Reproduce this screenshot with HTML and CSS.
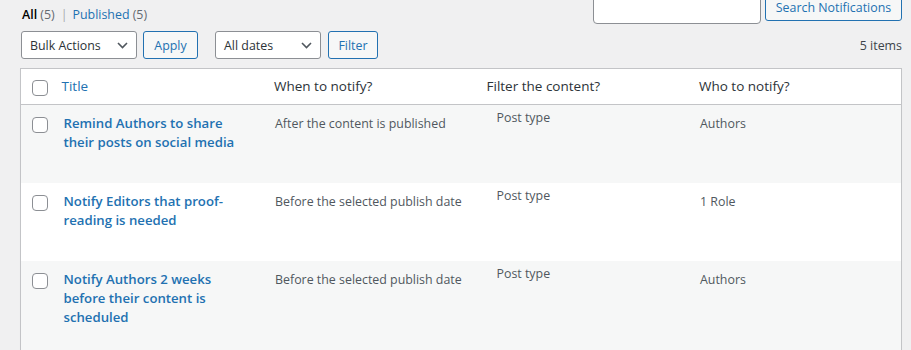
FILE: index.html
```html
<!DOCTYPE html>
<html>
<head>
<meta charset="utf-8">
<link rel="stylesheet" href="styles.css">
</head>
<body>
<div class="wrap">
  <div class="top">
    <ul class="subsubsub">
      <li><a class="current">All</a> <span class="count">(5)</span></li>
      <li class="sep">|</li>
      <li><a class="link">Published</a> <span class="count">(5)</span></li>
    </ul>
    <div class="search-box">
      <div class="search-input"></div>
      <div class="btn btn-search">Search Notifications</div>
    </div>
  </div>
  <div class="tablenav">
    <div class="actions">
      <div class="select select-bulk"><span>Bulk Actions</span><svg class="chev" width="11" height="7" viewBox="0 0 11 7"><path d="M1 1 L5.5 5.5 L10 1" fill="none" stroke="#50575e" stroke-width="1.6"/></svg></div>
      <div class="btn btn-apply">Apply</div>
    </div>
    <div class="actions">
      <div class="select select-dates"><span>All dates</span><svg class="chev" width="11" height="7" viewBox="0 0 11 7"><path d="M1 1 L5.5 5.5 L10 1" fill="none" stroke="#50575e" stroke-width="1.6"/></svg></div>
      <div class="btn btn-filter">Filter</div>
    </div>
    <div class="items">5 items</div>
  </div>
  <table class="list">
    <colgroup>
      <col class="c-check"><col><col><col><col>
    </colgroup>
    <thead>
      <tr>
        <th class="check"><span class="cb"></span></th>
        <th><a class="sort">Title</a></th>
        <th>When to notify?</th>
        <th>Filter the content?</th>
        <th>Who to notify?</th>
      </tr>
    </thead>
    <tbody>
      <tr class="alt">
        <td class="check"><span class="cb"></span></td>
        <td class="title"><a class="row-title">Remind Authors to share their posts on social media</a><div class="row-actions"></div></td>
        <td>After the content is published</td>
        <td><div class="filter">Post type</div></td>
        <td>Authors</td>
      </tr>
      <tr>
        <td class="check"><span class="cb"></span></td>
        <td class="title"><a class="row-title">Notify Editors that proof-reading is needed</a><div class="row-actions"></div></td>
        <td>Before the selected publish date</td>
        <td><div class="filter">Post type</div></td>
        <td>1 Role</td>
      </tr>
      <tr class="alt">
        <td class="check"><span class="cb"></span></td>
        <td class="title"><a class="row-title">Notify Authors 2 weeks before their content is scheduled</a><div class="row-actions"></div></td>
        <td>Before the selected publish date</td>
        <td><div class="filter">Post type</div></td>
        <td>Authors</td>
      </tr>
    </tbody>
  </table>
</div>
</body>
</html>
```

FILE: styles.css
```css
html, body {
  margin: 0;
  padding: 0;
}
body {
  background: #f0f0f1;
  color: #3c434a;
  font-family: "Open Sans", "Noto Sans", sans-serif;
  font-size: 12.4px;
  overflow: hidden;
}
.wrap {
  padding: 0 9px 0 20px;
}
.top {
  display: flex;
  justify-content: space-between;
  align-items: flex-start;
  height: 24px;
}
.subsubsub {
  list-style: none;
  margin: 5px 0 0 2px;
  padding: 0;
  display: flex;
  gap: 4px;
  line-height: 20px;
  color: #646970;
}
.subsubsub .current {
  color: #000;
  font-weight: 600;
}
.subsubsub .link {
  color: #2271b1;
}
.subsubsub .sep {
  color: #a7aaad;
  padding: 0 1px 0 2px;
}
.search-box {
  display: flex;
  gap: 4px;
  margin-top: -7px;
}
.search-input {
  width: 166px;
  height: 29px;
  background: #fff;
  border: 1px solid #8c8f94;
  border-radius: 4px;
}
.btn {
  display: flex;
  align-items: center;
  justify-content: center;
  box-sizing: border-box;
  height: 28px;
  padding: 0 8px;
  border: 1px solid #2271b1;
  border-radius: 3px;
  background: #f6f7f7;
  color: #2271b1;
  white-space: nowrap;
}
.btn-search { width: 137px; }
.btn-apply { width: 55px; }
.btn-filter { width: 50px; }
.tablenav {
  display: flex;
  align-items: center;
  margin-top: 7px;
  height: 28px;
  margin-bottom: 9px;
}
.actions {
  display: flex;
  gap: 6px;
  margin: 0 17px 0 1px;
}
.actions + .actions {
  gap: 7px;
  margin-left: 0;
}
.select {
  display: flex;
  align-items: center;
  justify-content: space-between;
  box-sizing: border-box;
  height: 28px;
  padding: 0 8px 0 8px;
  border: 1px solid #8c8f94;
  border-radius: 3px;
  background: #fff;
  color: #2c3338;
}
.select-bulk { width: 116px; }
.select-dates { width: 106px; }
.chev { display: block; }
.items {
  margin-left: auto;
  color: #3c434a;
}
.list {
  width: 882px;
  border-collapse: collapse;
  table-layout: fixed;
  background: #fff;
  border: 1px solid #c3c4c7;
  box-shadow: 0 1px 1px rgba(0,0,0,.04);
}
.c-check { width: 31px; }
.list th {
  text-align: left;
  font-weight: 400;
  font-size: 13.5px;
  color: #2c3338;
  padding: 8px 10px;
  line-height: 19px;
  border-bottom: 1px solid #c3c4c7;
}
.list th.check {
  padding: 11px 0 0 11px;
  vertical-align: top;
}
.sort { color: #2271b1; }
.cb {
  display: block;
  width: 14px;
  height: 14px;
  border: 1px solid #8c8f94;
  border-radius: 4px;
  background: #fff;
}
.list td {
  vertical-align: top;
  padding: 9px 10px 8px 11px;
  line-height: 19px;
  color: #50575e;
}
.list tr.alt td { background: #f6f7f7; }
.list td.check { padding: 12px 0 0 11px; }
.list td.title { padding-left: 12px; }
.row-title {
  display: block;
  color: #2271b1;
  font-weight: 600;
  font-size: 13.2px;
}
.row-actions {
  height: 23px;
}
.filter {
  margin: -6px 0 0 9px;
}
```
